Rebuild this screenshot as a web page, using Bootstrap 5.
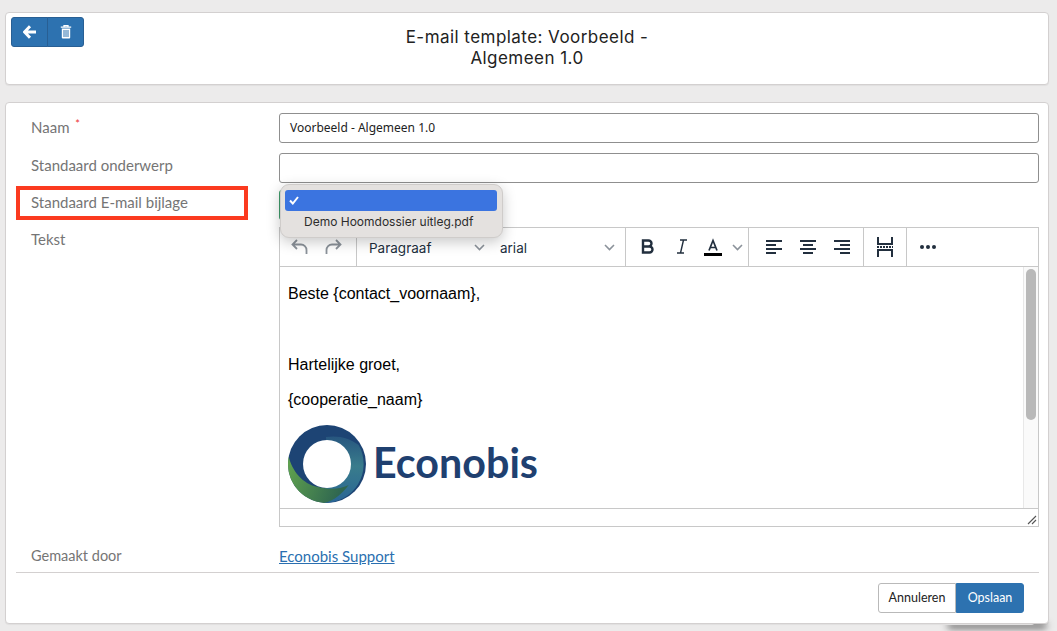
<!DOCTYPE html>
<html lang="nl"><head><meta charset="utf-8"><title>E-mail template</title>
<link rel="stylesheet" href="https://cdn.jsdelivr.net/npm/bootstrap@5.3.0/dist/css/bootstrap.min.css">
<style>
html,body{height:631px;overflow:hidden}
body{background:#ecebeb;font-family:Lato,"Open Sans",sans-serif;font-size:14px;color:#333;position:relative}
.page{padding:12px 8px 0 5px}
.panel{background:#fff;border:1px solid #d3d0d0;border-radius:4px;box-shadow:0 1px 1px rgba(0,0,0,.05)}
.head-panel{height:73px;padding:4px 5px;margin-bottom:17px;position:relative}
.tool-btn{background:#2d72b0;border:1px solid #285f94;height:30px;width:37px;padding:0;display:flex;align-items:center;justify-content:center}
.tool-btn:hover{background:#2d72b0;border-color:#285f94}
.btn-group .tool-btn{border-radius:3px 0 0 3px}
.btn-group .tool-btn+.tool-btn{border-radius:0 3px 3px 0}
.title-txt{line-height:21px;color:#222;text-align:center;width:290px;position:absolute;left:376px;top:14px;font-family:Inter,Lato,sans-serif;font-size:17px;letter-spacing:.45px}
.form-panel{height:522px;padding:10px 9px 0 10px;position:relative}
.frow{display:flex}
.gap-a{margin-bottom:10px}
.gap-b{margin-bottom:4px}
.lbl{width:263px;padding-left:15px;color:#757575;font-size:15px;line-height:30px;flex:none}
.up-1{margin-top:-1px}
.up-3{margin-top:-3px}
.req{color:#e33;font-size:11px;line-height:1;position:relative;top:-5px;margin-left:2px}
.fld{width:760px;height:30px;border:1px solid #8f8f8f;border-radius:3px;padding:0 10px;font-size:12px;line-height:28px;color:#222;background:#fff;font-family:"Noto Sans",Lato,sans-serif}
.editor{width:760px;height:300px;border:1px solid #c8c8c8;display:flex;flex-direction:column}
.tbar{height:39px;flex:none;border-bottom:1px solid #c8c8c8;display:flex;font-family:Inter,sans-serif;color:#222f3e;font-size:13px}
.tgrp{border-right:1px solid #c8c8c8;display:flex;align-items:center;flex:none}
.tgrp:last-child{border-right:0}
.tbody{flex:1;position:relative;overflow:hidden;font-family:"Liberation Sans",Arial,sans-serif;font-size:16px;color:#000;padding:18px 8px 0 8px}
.tbody p{margin:0;line-height:18px}
.stat{height:18px;flex:none;border-top:1px solid #c8c8c8;position:relative}
.track{position:absolute;right:0;top:0;bottom:0;width:15px;background:#fafafa;border-left:1px solid #e8e8e8}
.thumb{position:absolute;left:2px;top:2px;width:10px;height:151px;background:#b9b9b9;border-radius:5px}
.logo-word{font-family:Lato,sans-serif;font-weight:700;font-size:42px;fill:#1f4070}
.made{position:absolute;left:10px;top:443px;display:flex}
.made a{font-size:15px;color:#2a6fb0;line-height:20px;text-decoration:underline}
.made .lbl{line-height:20px;font-size:14.5px}
.rule{position:absolute;left:10px;right:9px;top:469px;border-top:1px solid #d3d0d0}
.foot{position:absolute;right:24px;top:480px;display:flex}
.foot .btn{height:30px;font-size:12.5px;padding:0;line-height:28px}
.btn-cancel{background:#fff;border:1px solid #b9b9b9;color:#222;border-radius:3px 0 0 3px;width:78px}
.btn-cancel:hover{background:#fff;color:#222;border-color:#b9b9b9}
.btn-save{background:#2d72b0;border:1px solid #2d72b0;color:#fff;border-radius:0 3px 3px 0;width:68px}
.btn-save:hover{background:#2d72b0;color:#fff;border-color:#2d72b0}
.red-box{position:absolute;left:16px;top:186px;width:232px;height:34px;border:4px solid #fb3a1f}
.greenedge{position:absolute;left:279px;top:190px;width:4px;height:30px;background:#3f9b6a;border-radius:3px 0 0 3px}
.pop{position:absolute;left:280px;top:184px;width:223px;height:54px;background:#e4e1df;border:1px solid #cfccca;border-radius:9px;box-shadow:0 4px 14px rgba(0,0,0,.22);padding:5px 5px 5px 4px;font-family:Inter,"Noto Sans",sans-serif;font-size:12px;color:#2c2c2c}
.pop-sel{height:21px;background:#3b74e0;border-radius:3px;display:flex;align-items:center;padding-left:4px}
.pop-item{padding-left:19px;line-height:22px}
.cast{position:absolute;left:935px;top:621px;width:100px;height:4px;box-shadow:12px 3px 7px rgba(0,0,0,.75);border-radius:0 0 4px 4px}
.nudge{position:relative;top:1px}
.sel-txt{position:absolute;left:143px;top:10px;font-size:13.5px}
</style></head>
<body>
<div class="cast"></div>
<div class="page">
  <div class="panel head-panel">
    <div class="btn-group">
      <button type="button" class="btn tool-btn" aria-label="Terug"><svg width="14" height="14" viewBox="0 0 14 14"><path d="M7 1.300 1.500 7 7 12.700M2 7h11" fill="none" stroke="#fff" stroke-width="3"/></svg></button>
      <button type="button" class="btn tool-btn" aria-label="Verwijderen"><svg width="12" height="14" viewBox="0 0 12 14"><path d="M4 1.500V.7h4v.8M.8 2.200h10.400" fill="none" stroke="#fff" stroke-width="1.300"/><path d="M1.800 3.500h8.400v9a1 1 0 0 1-1 1H2.800a1 1 0 0 1-1-1z" fill="#fff"/><path d="M4 5v7M6 5v7M8 5v7" stroke="#2d72b0" stroke-width="1"/></svg></button>
    </div>
    <div class="title-txt">E-mail template: Voorbeeld -<br>Algemeen 1.0</div>
  </div>
  <div class="panel form-panel">
    <div class="frow gap-a"><div class="lbl up-1">Naam <span class="req">*</span></div><div class="fld">Voorbeeld - Algemeen 1.0</div></div>
    <div class="frow gap-b"><div class="lbl up-3">Standaard onderwerp</div><div class="fld"></div></div>
    <div class="frow gap-a"><div class="lbl">Standaard E-mail bijlage</div></div>
    <div class="frow"><div class="lbl up-3">Tekst</div>
      <div class="editor">
        <div class="tbar">
          <div class="tgrp" style="width:77px;gap:13px;padding-left:10px">
            <svg width="20" height="20" viewBox="0 0 20 20" fill="none" stroke="#8b929a" stroke-width="1.800"><path d="M7 3 2.500 7.500 7 12M3 7.500h8a5.500 5.500 0 0 1 5.500 5.500v4"/></svg>
            <svg width="20" height="20" viewBox="0 0 20 20" fill="none" stroke="#8b929a" stroke-width="1.800"><path d="M13 3l4.500 4.500L13 12M17 7.500H9A5.500 5.500 0 0 0 3.500 13v4"/></svg>
          </div>
          <div class="tgrp" style="width:269px;padding-left:12px;position:relative">
            <span class="nudge" style="font-size:13.5px">Paragraaf</span>
            <svg style="position:absolute;left:117px;top:16px" width="11" height="7" viewBox="0 0 11 7" fill="none" stroke="#8b929a" stroke-width="1.600"><path d="M1 1l4.500 4.500L10 1"/></svg>
            <span class="sel-txt">arial</span>
            <svg style="position:absolute;left:247px;top:16px" width="11" height="7" viewBox="0 0 11 7" fill="none" stroke="#8b929a" stroke-width="1.600"><path d="M1 1l4.500 4.500L10 1"/></svg>
          </div>
          <div class="tgrp" style="width:123px;position:relative">
            <svg style="position:absolute;left:15px;top:11px" width="13" height="15" viewBox="0 0 13 15" fill="none" stroke="#222f3e" stroke-width="2.400"><path d="M2 1.500h5.500a3 3 0 0 1 0 6H2zM2 7.500h6.500a3 3 0 0 1 0 6H2z"/></svg>
            <svg style="position:absolute;left:50px;top:11px" width="12" height="15" viewBox="0 0 12 15" fill="none" stroke="#222f3e" stroke-width="1.400"><path d="M4 1h7M1 14h7M7.500 1 4.500 14"/></svg>
            <svg style="position:absolute;left:78px;top:10px" width="18" height="18" viewBox="0 0 18 18"><path d="M5 12.500 9 2.500l4 10M6.300 9.500h5.400" fill="none" stroke="#222f3e" stroke-width="1.700"/><rect y="15" width="18" height="3" fill="#000"/></svg>
            <svg style="position:absolute;left:106px;top:16px" width="11" height="7" viewBox="0 0 11 7" fill="none" stroke="#8b929a" stroke-width="1.600"><path d="M1 1l4.500 4.500L10 1"/></svg>
          </div>
          <div class="tgrp" style="width:115px;gap:18px;padding-left:17px">
            <svg width="16" height="14" viewBox="0 0 16 14" fill="#222f3e"><path d="M0 0h16v2H0zM0 4h10v2H0zM0 8h16v2H0zM0 12h10v2H0z"/></svg>
            <svg width="16" height="14" viewBox="0 0 16 14" fill="#222f3e"><path d="M0 0h16v2H0zM3 4h10v2H3zM0 8h16v2H0zM3 12h10v2H3z"/></svg>
            <svg width="16" height="14" viewBox="0 0 16 14" fill="#222f3e"><path d="M0 0h16v2H0zM6 4h10v2H6zM0 8h16v2H0zM6 12h10v2H6z"/></svg>
          </div>
          <div class="tgrp" style="width:43px;justify-content:center">
            <svg width="16" height="20" viewBox="0 0 16 20" fill="none" stroke="#222f3e" stroke-width="2"><path d="M1 0v7h14V0M1 20v-7h14v7"/><path d="M0 10h16" stroke-dasharray="2 1"/></svg>
          </div>
          <div class="tgrp" style="padding-left:13px">
            <svg width="16" height="4" viewBox="0 0 16 4" fill="#222f3e"><circle cx="2" cy="2" r="2"/><circle cx="8" cy="2" r="2"/><circle cx="14" cy="2" r="2"/></svg>
          </div>
        </div>
        <div class="tbody">
          <p>Beste {contact_voornaam},</p>
          <p style="margin-top:53px">Hartelijke groet,</p>
          <p style="margin-top:17px">{cooperatie_naam}</p>
          <svg style="display:block;margin-top:15px" width="252" height="80" viewBox="0 0 252 80" role="img" aria-label="Econobis">
            <defs>
              <linearGradient id="g1" x1="0" y1="0" x2="0" y2="1"><stop offset="0" stop-color="#27567f"/><stop offset=".45" stop-color="#397c8c"/><stop offset="1" stop-color="#2a6595"/></linearGradient>
              <linearGradient id="g2" x1="0" y1="0" x2="1" y2=".3"><stop offset="0" stop-color="#62a54e"/><stop offset="1" stop-color="#2f6650"/></linearGradient>
            </defs>
            <circle cx="39" cy="40" r="39" fill="#1d4474"/>
            <path d="M70.700 21C62 14 50 11 38 13L39 40 36 79A39 39 0 0 0 70.700 21z" fill="url(#g1)"/>
            <path d="M.7 32.700C4 46 14 60 30 63 42 66 53 65 60.700 61 54 70 46 77 36 78.900A39 39 0 0 1 .7 32.700z" fill="url(#g2)"/>
            <circle cx="39" cy="40" r="24" fill="#fff"/>
            <text class="logo-word" x="85" y="54" textLength="165" lengthAdjust="spacingAndGlyphs">Econobis</text>
          </svg>
          <div class="track"><div class="thumb"></div></div>
        </div>
        <div class="stat"><svg style="position:absolute;right:1px;bottom:1px" width="10" height="10" viewBox="0 0 10 10" stroke="#555" stroke-width="1.100"><path d="M1 9l8-8M5 9l4-4"/></svg></div>
      </div>
    </div>
    <div class="made"><div class="lbl">Gemaakt door</div><a href="#">Econobis Support</a></div>
    <div class="rule"></div>
    <div class="foot"><button type="button" class="btn btn-cancel">Annuleren</button><button type="button" class="btn btn-save">Opslaan</button></div>
  </div>
</div>
<div class="red-box"></div>
<div class="greenedge"></div>
<div class="pop">
  <div class="pop-sel"><svg width="10" height="9" viewBox="0 0 10 9" fill="none" stroke="#fff" stroke-width="2"><path d="M1 4.500 3.800 7.500 9 1"/></svg></div>
  <div class="pop-item">Demo Hoomdossier uitleg.pdf</div>
</div>
</body></html>
